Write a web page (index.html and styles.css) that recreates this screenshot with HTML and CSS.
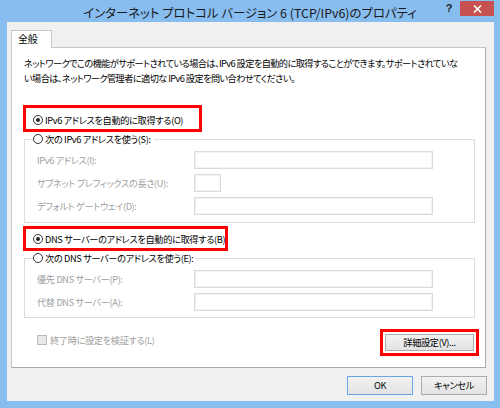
FILE: index.html
```html
<!DOCTYPE html>
<html lang="ja">
<head>
<meta charset="utf-8">
<link rel="stylesheet" href="styles.css">
</head>
<body>
<div class="window">
  <div class="titlebar">
    <div class="title">インターネット プロトコル バージョン 6 (TCP/IPv6)のプロパティ</div>
    <div class="controls">
      <span class="help">?</span>
      <span class="close"><svg width="9" height="8" viewBox="0 0 9 8"><path d="M1 0.5 L8 7.5 M8 0.5 L1 7.5" stroke="#fff" stroke-width="1.6"/></svg></span>
    </div>
  </div>
  <div class="client">
    <div class="tabs"><div class="tab">全般</div></div>
    <div class="panel">
      <p class="desc">ネットワークでこの機能がサポートされている場合は、IPv6 設定を自動的に取得することができます。サポートされていな<br>い場合は、ネットワーク管理者に適切な IPv6 設定を問い合わせてください。</p>

      <div class="highlight hl1"><span class="radio checked"></span><span>IPv6 アドレスを自動的に取得する(O)</span></div>
      <fieldset class="group g1">
        <legend><span class="radio"></span><span>次の IPv6 アドレスを使う(S):</span></legend>
        <div class="row"><span class="lbl">IPv6 アドレス(I):</span><span class="field wide"></span></div>
        <div class="row"><span class="lbl">サブネット プレフィックスの長さ(U):</span><span class="field small"></span></div>
        <div class="row"><span class="lbl">デフォルト ゲートウェイ(D):</span><span class="field wide"></span></div>
      </fieldset>

      <div class="highlight hl2"><span class="radio checked"></span><span>DNS サーバーのアドレスを自動的に取得する(B)</span></div>
      <fieldset class="group g2">
        <legend><span class="radio"></span><span>次の DNS サーバーのアドレスを使う(E):</span></legend>
        <div class="row"><span class="lbl">優先 DNS サーバー(P):</span><span class="field wide"></span></div>
        <div class="row"><span class="lbl">代替 DNS サーバー(A):</span><span class="field wide"></span></div>
      </fieldset>

      <div class="bottom-row">
        <div class="check"><span class="box"></span><span>終了時に設定を検証する(L)</span></div>
        <div class="highlight hl3"><button class="btn adv">詳細設定(V)...</button></div>
      </div>
    </div>
    <div class="buttons">
      <button class="btn default">OK</button>
      <button class="btn">キャンセル</button>
    </div>
  </div>
</div>
</body>
</html>
```

FILE: styles.css
```css
* { box-sizing: border-box; }
html, body { margin: 0; padding: 0; }
body {
  font-family: "Noto Sans CJK JP", "Noto Sans", sans-serif;
  font-feature-settings: "palt";
  font-size: 9.2px;
  letter-spacing: -0.35px;
  color: #000;
  background: #88bdf0;
}
.window {
  width: 500px;
  height: 408px;
  background: #88bdf0;
  display: flex;
  flex-direction: column;
  padding: 0 6px 7px 7px;
}
.titlebar {
  height: 22px;
  display: flex;
  align-items: flex-start;
  margin: 0 -6px 0 -7px;
}
.title {
  flex: 1;
  text-align: center;
  padding-left: 57px;
  font-size: 12.4px;
  letter-spacing: 0;
  line-height: 26px;
  color: #1a1a1a;
  white-space: nowrap;
}
.controls {
  display: flex;
  align-items: flex-start;
  gap: 5px;
  margin-right: 6px;
}
.help {
  width: 12px;
  text-align: center;
  font-family: "Liberation Sans", sans-serif;
  font-weight: bold;
  font-size: 11px;
  letter-spacing: 0;
  line-height: 16px;
  color: #222;
}
.close {
  width: 34px;
  height: 15px;
  margin-top: 1px;
  background: #c75050;
  display: flex;
  align-items: center;
  justify-content: center;
}
.close svg { display: block; }

.client {
  flex: 1;
  background: #f0f0f0;
  display: flex;
  flex-direction: column;
  padding: 8px 7px 6px 4px;
}
.tabs { display: flex; }
.tab {
  position: relative;
  z-index: 1;
  width: 41px;
  height: 18px;
  margin-bottom: -1px;
  background: #fff;
  border: 1px solid #c6c6c6;
  border-bottom: none;
  padding-left: 6px;
  line-height: 15px;
  font-size: 10px;
}
.panel {
  flex: 1;
  margin-right: 1px;
  background: #fff;
  border: 1px solid #c6c6c6;
  border-right-color: #a9a9a9;
  border-bottom-color: #a9a9a9;
  padding: 0 10px 0 11px;
  display: flex;
  flex-direction: column;
  align-items: flex-start;
}
.desc {
  margin: 8px 0 0 1px;
  line-height: 14.5px;
  letter-spacing: -0.58px;
  white-space: nowrap;
}
.highlight {
  border: 3px solid #f00;
  display: flex;
  align-items: center;
  white-space: nowrap;
}
.hl1 {
  margin-top: 20px;
  width: 179px;
  height: 27px;
  padding: 2px 0 0 7px;
}
.hl2 {
  margin-top: 3px;
  width: 205px;
  height: 25px;
  padding: 1px 0 0 7px;
}
.radio {
  width: 10px;
  height: 10px;
  border: 1px solid #333;
  border-radius: 50%;
  background: #fff;
  margin-right: 2px;
  display: inline-flex;
  align-items: center;
  justify-content: center;
  flex: none;
}
.radio.checked::after {
  content: "";
  width: 4px;
  height: 4px;
  border-radius: 50%;
  background: #222;
}
.group {
  align-self: stretch;
  margin: 0 0 0 1px;
  min-inline-size: 0;
  border: 1px solid #dcdcdc;
  padding: 5px 0 7px 8px;
  display: flex;
  flex-direction: column;
  gap: 5px;
}
.g2 { padding-bottom: 6px; }
.group legend {
  padding: 0 3px 0 0;
  line-height: 14px;
  display: flex;
  align-items: center;
  white-space: nowrap;
}
.row {
  display: grid;
  grid-template-columns: 157px auto;
  align-items: center;
  padding-left: 4px;
  height: 18px;
}
.lbl { color: #a0a0a0; white-space: nowrap; }
.field {
  height: 18px;
  border: 1px solid #dadada;
  box-shadow: inset 0 0 0 1px #f3f3f3;
  background: #fff;
}
.field.wide { width: 239px; }
.field.small { width: 27px; }

.bottom-row {
  align-self: stretch;
  margin-top: 11px;
  margin-right: -4px;
  display: flex;
  justify-content: space-between;
  align-items: flex-start;
}
.check {
  margin: 4px 0 0 14px;
  display: flex;
  align-items: center;
  gap: 3px;
  color: #a0a0a0;
  line-height: 14px;
  white-space: nowrap;
}
.box {
  width: 10px;
  height: 10px;
  border: 1px solid #bcbcbc;
  background: #e8e8e8;
}
.hl3 {
  width: 99px;
  height: 27px;
  padding: 2px;
}
.btn {
  font: inherit;
  letter-spacing: inherit;
  font-feature-settings: "palt";
  color: #000;
  background: linear-gradient(#f2f2f2, #e3e3e3);
  border: 1px solid #acacac;
  padding: 0;
  margin: 0;
  line-height: 15px;
  white-space: nowrap;
}
.adv { width: 89px; height: 17px; }
.buttons {
  margin-top: 8px;
  display: flex;
  justify-content: flex-end;
  gap: 8px;
}
.buttons .btn { width: 66px; height: 19px; }
.btn.default { border-color: #6aa6e6; }
```
